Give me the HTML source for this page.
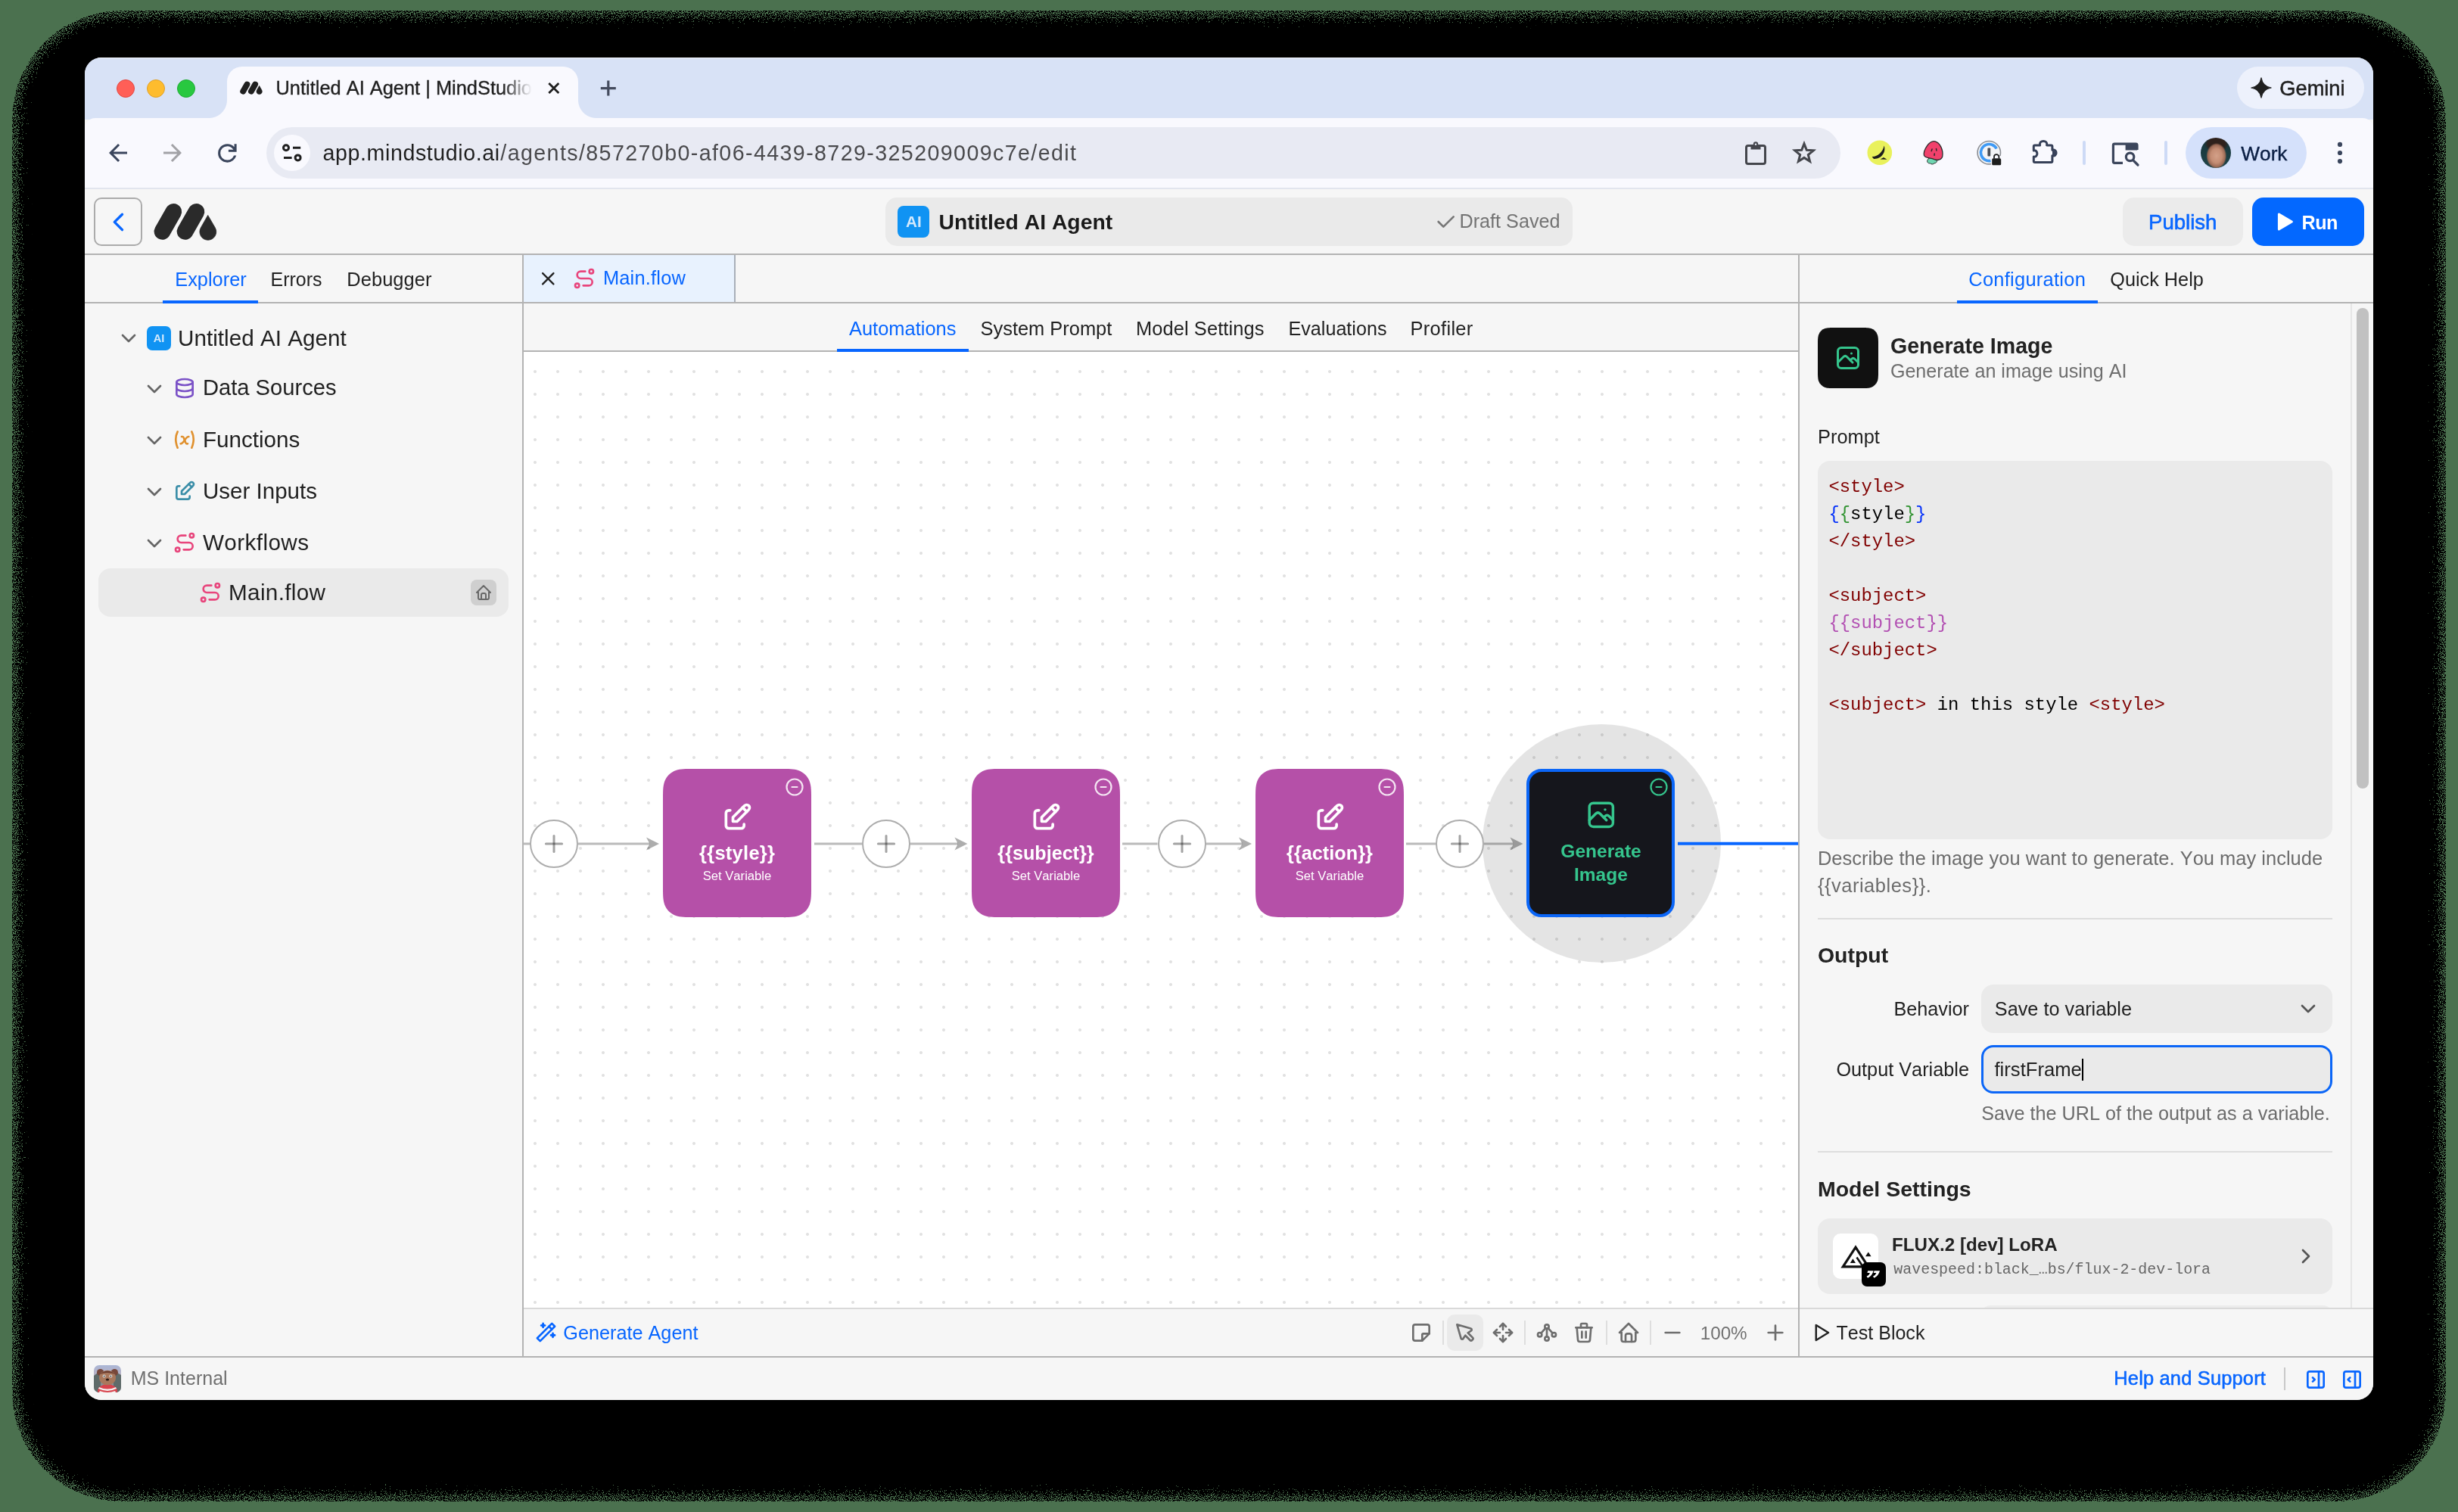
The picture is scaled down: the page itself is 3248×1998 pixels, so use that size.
<!DOCTYPE html>
<html><head><meta charset="utf-8"><title>MindStudio</title>
<style>
html,body{margin:0;padding:0;width:3248px;height:1998px;overflow:hidden;background:#4b714f;font-family:"Liberation Sans",sans-serif;font-kerning:none}
#root{position:relative;width:3248px;height:1998px;overflow:hidden}
#root div,#root span,#root svg{position:absolute;box-sizing:border-box}
#root span{white-space:pre;line-height:1;display:block}
#win{will-change:transform;left:112px;top:76px;width:3024px;height:1774px;border-radius:22px;overflow:hidden;background:#f6f6f6}
</style></head><body><div id="root">
<svg style="left:0;top:0" width="0" height="0"><defs><filter id="dz" x="0" y="0" width="100%" height="100%" filterUnits="objectBoundingBox" color-interpolation-filters="sRGB">
<feTurbulence type="fractalNoise" baseFrequency="0.85" numOctaves="1" seed="7" result="n"/>
<feColorMatrix in="n" type="matrix" values="0 0 0 0 0 0 0 0 0 0 0 0 0 0 0 1.9 0 0 0 -0.45" result="na"/>
<feComposite in="SourceGraphic" in2="na" operator="arithmetic" k1="0" k2="30" k3="-29" k4="0" result="t"/>
<feColorMatrix in="t" type="matrix" values="0 0 0 0 0 0 0 0 0 0 0 0 0 0 0 0 0 0 1 0"/>
</filter></defs></svg>
<div style="left:0;top:0;width:3248px;height:1998px;filter:url(#dz)">
<div style="left:16px;top:14px;width:3216px;height:1970px;border-radius:144px;background:rgba(0,0,0,0.5)"></div>
<div style="left:29px;top:27px;width:3190px;height:1944px;border-radius:131px;background:#000;filter:blur(6.5px)"></div>
<div style="left:60px;top:60px;width:3128px;height:1878px;border-radius:100px;background:#000"></div>
</div>
<div id="win"><div style="left:-112px;top:-76px;width:3248px;height:1998px"><div style="left:112px;top:76px;width:3024px;height:82px;background:#d8e2f6;border-radius:0px;"></div><div style="left:112px;top:76px;width:3024px;height:1px;background:rgba(255,255,255,0.75);border-radius:0px;"></div><div style="left:112px;top:156px;width:3024px;height:92px;background:#f9f9fe;border-radius:0px;border-radius:14px 14px 0 0;"></div><div style="left:112px;top:248px;width:3024px;height:2px;background:#e2e5ee;border-radius:0px;"></div><div style="left:300px;top:88px;width:464px;height:70px;background:#f9f9fe;border-radius:0px;border-radius:20px 20px 0 0;"></div><div style="left:276px;top:132px;width:24px;height:24px;background:;border-radius:0px;background:radial-gradient(circle at 0 0,#d8e2f6 23.5px,#f9f9fe 24.5px);"></div><div style="left:764px;top:132px;width:24px;height:24px;background:;border-radius:0px;background:radial-gradient(circle at 100% 0,#d8e2f6 23.5px,#f9f9fe 24.5px);"></div><div style="left:154px;top:104.5px;width:24px;height:24px;background:#ff5f57;border-radius:12px;border:1px solid #e24640;"></div><div style="left:194px;top:104.5px;width:24px;height:24px;background:#febc2e;border-radius:12px;border:1px solid #e0a028;"></div><div style="left:234px;top:104.5px;width:24px;height:24px;background:#28c840;border-radius:12px;border:1px solid #1eab33;"></div><svg style="left:312px;top:100px;" width="40" height="32" viewBox="312 100 40 32"><path d="M321.18,120.74 L326.45,111.48" stroke="#1f1f1f" stroke-width="7.76" stroke-linecap="round" fill="none"/><path d="M331.90,120.74 L337.16,111.48" stroke="#1f1f1f" stroke-width="7.76" stroke-linecap="round" fill="none"/><path d="M342.61,113.08 L346.03,118.99 A3.88,3.88 0 1 1 339.27,118.99 Z" fill="#1f1f1f" stroke="#1f1f1f" stroke-width="0.28" stroke-linejoin="round"/></svg><span style="left:364.50px;top:104.39px;font-family:'Liberation Sans';font-size:25.41px;font-weight:400;color:#1f1f1f;letter-spacing:0.000px;-webkit-text-stroke:0.35px #1f1f1f;">Untitled AI Agent | MindStudio</span><div style="left:664px;top:98px;width:52px;height:40px;background:;border-radius:0px;background:linear-gradient(to right,rgba(249,249,254,0) 0,#f9f9fe 75%);"></div><svg style="left:720px;top:104px;" width="24" height="24" viewBox="720 104 24 24"><path d="M725.3,110.1 L738.3,123.1 M738.3,110.1 L725.3,123.1" stroke="#1f1f1f" stroke-width="2.8" fill="none"/></svg><svg style="left:790px;top:102px;" width="28" height="28" viewBox="790 102 28 28"><path d="M803.8,106.6 V126.6 M793.8,116.6 H813.8" stroke="#444b5e" stroke-width="3.2" fill="none"/></svg><div style="left:2956px;top:88px;width:168px;height:56px;background:#edf1fc;border-radius:28px;"></div><svg style="left:2972px;top:100px;" width="32" height="32" viewBox="2972 100 32 32"><path d="M2988,102.8 C2989.2,110.4 2993.8,114.9 3001.2,116 C2993.8,117.1 2989.2,121.6 2988,129.2 C2986.8,121.6 2982.2,117.1 2974.8,116 C2982.2,114.9 2986.8,110.4 2988,102.8 Z" fill="#1f1f1f" stroke="#1f1f1f" stroke-width="1.2" stroke-linejoin="round"/></svg><span style="left:3012.30px;top:102.64px;font-family:'Liberation Sans';font-size:27.24px;font-weight:400;color:#1f1f1f;letter-spacing:0.000px;-webkit-text-stroke:0.5px #1f1f1f;">Gemini</span><svg style="left:138.2px;top:184px;" width="36" height="36" viewBox="0 0 24 24" fill="#3a455c" stroke="none" stroke-width="0" stroke-linecap="round" stroke-linejoin="round"><path d="M7.825 13l5.6 5.6L12 20l-8-8 8-8 1.425 1.4-5.6 5.6H20v2z"/></svg><svg style="left:210.1px;top:184px;" width="36" height="36" viewBox="0 0 24 24" fill="#a2a2a6" stroke="none" stroke-width="0" stroke-linecap="round" stroke-linejoin="round"><path d="M16.175 13H4v-2h12.175l-5.6-5.6L12 4l8 8-8 8-1.425-1.4z"/></svg><svg style="left:281.7px;top:183.6px;" width="36.75" height="36.75" viewBox="0 0 24 24" fill="#3a455c" stroke="none" stroke-width="0" stroke-linecap="round" stroke-linejoin="round"><path d="M12 20q-3.35 0-5.675-2.325T4 12t2.325-5.675T12 4q1.725 0 3.3.712T18 6.75V4h2v7h-7V9h4.2q-.8-1.4-2.187-2.2T12 6Q9.5 6 7.75 7.75T6 12t1.75 4.25T12 18q1.925 0 3.475-1.1T17.65 14h2.1q-.7 2.65-2.85 4.325T12 20"/></svg><div style="left:352px;top:168px;width:2080px;height:68px;background:#e8eaf3;border-radius:34px;"></div><div style="left:362px;top:178px;width:48px;height:48px;background:#f9f9fe;border-radius:24px;"></div><svg style="left:368px;top:186px;" width="36" height="32" viewBox="368 186 36 32"><g stroke="#1f1f1f" stroke-width="3" fill="none"><circle cx="378" cy="195.3" r="3.5"/><path d="M387,195.3 H397.2 M375,208.4 H385.6"/><circle cx="393.6" cy="208.4" r="3.5"/></g></svg><span style="left:426.50px;top:187.77px;font-family:'Liberation Sans';font-size:28.62px;font-weight:400;color:#1f1f1f;letter-spacing:0.591px;">app.mindstudio.ai</span><span style="left:661.30px;top:187.77px;font-family:'Liberation Sans';font-size:28.62px;font-weight:400;color:#4a4a4d;letter-spacing:1.399px;">/agents/857270b0-af06-4439-8729-325209009c7e/edit</span><svg style="left:2300px;top:182px;" width="40" height="40" viewBox="2300 182 40 40"><g fill="none" stroke="#44464c" stroke-width="3" stroke-linejoin="round"><rect x="2307.5" y="192.5" width="25" height="24" rx="2.5"/></g><path d="M2313.5,191 h13 v6.5 h-13 z" fill="#44464c"/><circle cx="2320" cy="190.5" r="3.2" fill="#44464c"/><circle cx="2320" cy="190.8" r="1.2" fill="#e8eaf3"/></svg><svg style="left:2364px;top:182px;" width="40" height="40" viewBox="2364 182 40 40"><polygon points="2384.00,189.90 2387.29,198.27 2396.27,198.81 2389.33,204.53 2391.58,213.24 2384.00,208.40 2376.42,213.24 2378.67,204.53 2371.73,198.81 2380.71,198.27" fill="none" stroke="#44464c" stroke-width="3" stroke-linejoin="miter"/></svg><svg style="left:2464px;top:182px;" width="40" height="40" viewBox="2464 182 40 40"><circle cx="2483.8" cy="201.7" r="16.3" fill="#e9f15c"/><path d="M2473.6,207 C2481,207.5 2488,201 2489.6,192.6 C2492.6,200.5 2486.5,210.5 2476,210 Z" fill="#1d1d1d"/><path d="M2484.5,210.6 L2489,208 L2493.6,210.8 Z" fill="#1d1d1d"/></svg><svg style="left:2536px;top:182px;" width="40" height="40" viewBox="2536 182 40 40"><path d="M2549,209 C2551.5,207.6 2556.5,208.3 2559,210.6 C2560.5,213 2558.6,216 2556,215.6 C2555,217.4 2551.6,217.4 2550.6,215.8 C2547.6,216.4 2545.8,213.6 2547,211.4 Z" fill="#6fd6b1" stroke="#2a2a2a" stroke-width="1"/><path d="M2557,186.8 C2563.5,188.5 2568,198 2566.8,206.5 C2566,211 2560.5,212.6 2556,210.6 C2550.5,208 2544.5,209.5 2542.5,205.5 C2541,199 2549,185 2557,186.8 Z" fill="#f1416c" stroke="#2a2a2a" stroke-width="1.3"/><path d="M2553,197 l-0.8,2.6 M2558.5,196.4 l0.4,2.6 M2556.2,203 l-0.2,2.4" stroke="#2a2a2a" stroke-width="1.5" stroke-linecap="round"/></svg><svg style="left:2608px;top:182px;" width="44" height="40" viewBox="2608 182 44 40"><circle cx="2628.3" cy="201.7" r="15.2" fill="#f4f4f6" stroke="#8a8d93" stroke-width="1.6"/><path d="M2638.2,196.5 A11,11 0 1 0 2630.5,212.4" fill="none" stroke="#3f9af5" stroke-width="3.6"/><rect x="2626.4" y="195.6" width="3.8" height="11" rx="1" fill="#4b4f58"/><rect x="2631" y="206" width="14" height="13" fill="#f9f9fe"/><path d="M2635,209.5 v-2.2 a3.2,3.2 0 0 1 6.4,0 v2.2" fill="none" stroke="#1d1d1d" stroke-width="1.8"/><rect x="2632.2" y="209.3" width="12" height="9" rx="1.6" fill="#1d1d1d"/></svg><svg style="left:2680px;top:180px;" width="44" height="40" viewBox="2680 180 44 40"><path d="M2687.3,193.4 A1.5,1.5 0 0 1 2688.8,191.9 H2695.6 C2693.6,184.6 2706.6,184.6 2704.6,191.9 H2710.4 A1.5,1.5 0 0 1 2711.9,193.4 V198.3 C2718.8,196.4 2718.8,207.6 2711.9,205.7 V213 A1.5,1.5 0 0 1 2710.4,214.5 H2688.8 A1.5,1.5 0 0 1 2687.3,213 V207 C2693.4,208.4 2693.4,197.6 2687.3,199 Z" fill="none" stroke="#364058" stroke-width="3" stroke-linejoin="round"/><path d="M2712,199 C2717.4,198 2717.4,206 2712,205 Z" fill="#364058"/></svg><div style="left:2752px;top:186px;width:4px;height:32px;background:#cddaf6;border-radius:2px;"></div><svg style="left:2786px;top:184px;" width="44" height="40" viewBox="2786 184 44 40"><g fill="none" stroke="#3c465c" stroke-width="3.2"><path d="M2805,215.4 H2794.2 A1.8,1.8 0 0 1 2792.4,213.6 V192 A1.8,1.8 0 0 1 2794.2,190.2 H2822.2 A1.8,1.8 0 0 1 2824,192 V198"/><circle cx="2814.6" cy="207.4" r="5.2"/><path d="M2818.6,211.6 L2825,218" stroke-linecap="round"/></g><path d="M2808.6,190 H2822.4 A1.8,1.8 0 0 1 2824.2,191.8 V198.6 H2808.6 Z" fill="#3c465c"/></svg><div style="left:2860px;top:186px;width:4px;height:32px;background:#cddaf6;border-radius:2px;"></div><div style="left:2888px;top:168px;width:160px;height:68px;background:#d5e1fb;border-radius:34px;"></div><div style="left:2908px;top:182px;width:40px;height:40px;background:;border-radius:20px;overflow:hidden;background:radial-gradient(ellipse 13.5px 17px at 52% 60%,#d3a088 0,#c48d74 55%,#9c6a55 85%,rgba(60,40,34,0) 100%),radial-gradient(ellipse 16px 12px at 52% 20%,#2e211c 0,#2e211c 70%,rgba(0,0,0,0) 100%),linear-gradient(#17353a,#1f4348);"></div><span style="left:2961.30px;top:189.60px;font-family:'Liberation Sans';font-size:26.23px;font-weight:400;color:#0b1f44;letter-spacing:0.000px;-webkit-text-stroke:0.4px #0b1f44;">Work</span><svg style="left:3084px;top:184px;" width="16" height="36" viewBox="3084 184 16 36"><g fill="#3a455c"><circle cx="3092" cy="190.9" r="3.1"/><circle cx="3092" cy="202" r="3.1"/><circle cx="3092" cy="213.1" r="3.1"/></g></svg><div style="left:112px;top:250px;width:3024px;height:86px;background:#f6f6f6;border-radius:0px;"></div><div style="left:112px;top:335px;width:3024px;height:2px;background:#b3b3b3;border-radius:0px;"></div><div style="left:124px;top:261px;width:64px;height:64px;background:#f6f6f6;border-radius:10px;border:2px solid #ababab;"></div><svg style="left:135.6px;top:272.6px;" width="40.8" height="40.8" viewBox="0 0 24 24" fill="none" stroke="#0866ff" stroke-width="2" stroke-linecap="round" stroke-linejoin="round"><path d="M15 6l-6 6l6 6"/></svg><svg style="left:196px;top:262px;" width="100" height="62" viewBox="196 262 100 62"><path d="M214.50,305.90 L229.30,279.90" stroke="#2a2a2a" stroke-width="21.80" stroke-linecap="round" fill="none"/><path d="M244.60,305.90 L259.40,279.90" stroke="#2a2a2a" stroke-width="21.80" stroke-linecap="round" fill="none"/><path d="M274.70,284.40 L284.30,301.00 A10.90,10.90 0 1 1 265.30,301.00 Z" fill="#2a2a2a" stroke="#2a2a2a" stroke-width="0.80" stroke-linejoin="round"/></svg><div style="left:1170px;top:261px;width:908px;height:64px;background:#eaeaea;border-radius:15px;"></div><div style="left:1186px;top:272px;width:42px;height:42px;background:#1093f3;border-radius:8px;"></div><span style="left:1197.10px;top:282.78px;font-family:'Liberation Sans';font-size:20.7px;font-weight:700;color:#d2e9fc;letter-spacing:0.000px;">AI</span><span style="left:1240.50px;top:279.03px;font-family:'Liberation Sans';font-size:28.32px;font-weight:700;color:#1a1a1a;letter-spacing:0.000px;">Untitled AI Agent</span><svg style="left:1893.5px;top:277px;" width="32" height="32" viewBox="0 0 24 24" fill="none" stroke="#777" stroke-width="2" stroke-linecap="round" stroke-linejoin="round"><path d="M5 12l5 5l10 -10"/></svg><span style="left:1928.50px;top:280.28px;font-family:'Liberation Sans';font-size:25.19px;font-weight:400;color:#737373;letter-spacing:0.000px;">Draft Saved</span><div style="left:2805px;top:261px;width:159px;height:64px;background:#ebebeb;border-radius:15px;"></div><span style="left:2839.00px;top:279.65px;font-family:'Liberation Sans';font-size:27.59px;font-weight:400;color:#0866ff;letter-spacing:0.000px;-webkit-text-stroke:0.6px #0866ff;">Publish</span><div style="left:2976px;top:261px;width:148px;height:64px;background:#0368ff;border-radius:15px;"></div><svg style="left:3004px;top:276px;" width="32" height="34" viewBox="3004 276 32 34"><path d="M3011.4,283 L3011.4,303 L3028.4,293 Z" fill="#fff" stroke="#fff" stroke-width="3" stroke-linejoin="round"/></svg><span style="left:3041.50px;top:281.67px;font-family:'Liberation Sans';font-size:25.2px;font-weight:700;color:#fff;letter-spacing:-0.497px;">Run</span><div style="left:690px;top:337px;width:2px;height:1456px;background:#b3b3b3;border-radius:0px;"></div><div style="left:112px;top:399px;width:580px;height:2px;background:#b3b3b3;border-radius:0px;"></div><span style="left:231.30px;top:357.04px;font-family:'Liberation Sans';font-size:25.35px;font-weight:400;color:#0866ff;letter-spacing:-0.000px;">Explorer</span><span style="left:357.50px;top:357.35px;font-family:'Liberation Sans';font-size:24.98px;font-weight:400;color:#222222;letter-spacing:-0.000px;">Errors</span><span style="left:458.30px;top:356.97px;font-family:'Liberation Sans';font-size:25.44px;font-weight:400;color:#222222;letter-spacing:0.065px;">Debugger</span><div style="left:215px;top:397px;width:126px;height:4px;background:#0866ff;border-radius:0px;"></div><svg style="left:154px;top:431.3px;" width="32" height="32" viewBox="0 0 24 24" fill="none" stroke="#666" stroke-width="2" stroke-linecap="round" stroke-linejoin="round"><path d="M6 9l6 6l6 -6"/></svg><div style="left:194px;top:431px;width:32px;height:32px;background:#1093f3;border-radius:7px;"></div><span style="left:202.80px;top:439.94px;font-family:'Liberation Sans';font-size:14.6px;font-weight:700;color:#d2e9fc;letter-spacing:0.000px;">AI</span><span style="left:235.00px;top:431.88px;font-family:'Liberation Sans';font-size:29.68px;font-weight:400;color:#222222;letter-spacing:0.010px;">Untitled AI Agent</span><svg style="left:188.2px;top:497.8px;" width="32" height="32" viewBox="0 0 24 24" fill="none" stroke="#666" stroke-width="2" stroke-linecap="round" stroke-linejoin="round"><path d="M6 9l6 6l6 -6"/></svg><svg style="left:228px;top:497px;" width="32" height="32" viewBox="0 0 24 24" fill="none" stroke="#7b52c7" stroke-width="2" stroke-linecap="round" stroke-linejoin="round"><path d="M12 6m-8 0a8 3 0 1 0 16 0a8 3 0 1 0 -16 0"/><path d="M4 6v6a8 3 0 0 0 16 0v-6"/><path d="M4 12v6a8 3 0 0 0 16 0v-6"/></svg><span style="left:267.90px;top:498.10px;font-family:'Liberation Sans';font-size:29.18px;font-weight:400;color:#222222;letter-spacing:0.000px;">Data Sources</span><svg style="left:188.2px;top:565.8px;" width="32" height="32" viewBox="0 0 24 24" fill="none" stroke="#666" stroke-width="2" stroke-linecap="round" stroke-linejoin="round"><path d="M6 9l6 6l6 -6"/></svg><svg style="left:228px;top:565px;" width="32" height="32" viewBox="0 0 24 24" fill="none" stroke="#e0912f" stroke-width="2" stroke-linecap="round" stroke-linejoin="round"><path d="M5 4c-2.5 5 -2.5 10 0 16m14 -16c2.5 5 2.5 10 0 16m-10 -11h1c1 0 1 1 2.016 3.527c.984 2.473 .984 3.473 1.984 3.473h1"/><path d="M8 16c1.5 0 3 -2 4 -3.5s2.5 -3.5 4 -3.5"/></svg><span style="left:267.90px;top:565.71px;font-family:'Liberation Sans';font-size:29.64px;font-weight:400;color:#222222;letter-spacing:0.000px;">Functions</span><svg style="left:188.2px;top:634.0999999999999px;" width="32" height="32" viewBox="0 0 24 24" fill="none" stroke="#666" stroke-width="2" stroke-linecap="round" stroke-linejoin="round"><path d="M6 9l6 6l6 -6"/></svg><svg style="left:228px;top:633.3px;" width="32" height="32" viewBox="0 0 24 24" fill="none" stroke="#3b8ea8" stroke-width="2" stroke-linecap="round" stroke-linejoin="round"><path d="M7 7h-1a2 2 0 0 0 -2 2v9a2 2 0 0 0 2 2h9a2 2 0 0 0 2 -2v-1"/><path d="M20.385 6.585a2.1 2.1 0 0 0 -2.97 -2.97l-8.415 8.385v3h3l8.385 -8.415z"/><path d="M16 5l3 3"/></svg><span style="left:267.90px;top:634.07px;font-family:'Liberation Sans';font-size:29.57px;font-weight:400;color:#222222;letter-spacing:0.000px;">User Inputs</span><svg style="left:188.2px;top:702.1999999999999px;" width="32" height="32" viewBox="0 0 24 24" fill="none" stroke="#666" stroke-width="2" stroke-linecap="round" stroke-linejoin="round"><path d="M6 9l6 6l6 -6"/></svg><svg style="left:228px;top:701.4px;" width="32" height="32" viewBox="0 0 24 24" fill="none" stroke="#e8457c" stroke-width="2" stroke-linecap="round" stroke-linejoin="round"><path d="M3 19a2 2 0 1 0 4 0a2 2 0 0 0 -4 0"/><path d="M19 7a2 2 0 1 0 0 -4a2 2 0 0 0 0 4z"/><path d="M11 19h5.5a3.5 3.5 0 0 0 0 -7h-8a3.5 3.5 0 0 1 0 -7h4.5"/></svg><span style="left:267.90px;top:702.08px;font-family:'Liberation Sans';font-size:29.68px;font-weight:400;color:#222222;letter-spacing:0.416px;">Workflows</span><div style="left:130px;top:751px;width:542px;height:64px;background:#eaeaea;border-radius:16px;"></div><svg style="left:262.1px;top:767.3px;" width="32" height="32" viewBox="0 0 24 24" fill="none" stroke="#e8457c" stroke-width="2" stroke-linecap="round" stroke-linejoin="round"><path d="M3 19a2 2 0 1 0 4 0a2 2 0 0 0 -4 0"/><path d="M19 7a2 2 0 1 0 0 -4a2 2 0 0 0 0 4z"/><path d="M11 19h5.5a3.5 3.5 0 0 0 0 -7h-8a3.5 3.5 0 0 1 0 -7h4.5"/></svg><span style="left:302.00px;top:767.88px;font-family:'Liberation Sans';font-size:29.68px;font-weight:400;color:#222222;letter-spacing:0.330px;">Main.flow</span><div style="left:622px;top:766px;width:34px;height:34px;background:#cfcfcf;border-radius:8px;"></div><svg style="left:627px;top:771px;" width="24" height="24" viewBox="0 0 24 24" fill="none" stroke="#686868" stroke-width="2" stroke-linecap="round" stroke-linejoin="round"><path d="M5 12l-2 0l9 -9l9 9l-2 0"/><path d="M5 12v7a2 2 0 0 0 2 2h10a2 2 0 0 0 2 -2v-7"/><path d="M9 21v-6a2 2 0 0 1 2 -2h2a2 2 0 0 1 2 2v6"/></svg><div style="left:692px;top:337px;width:278px;height:62px;background:#e8f2fe;border-radius:0px;"></div><div style="left:970px;top:337px;width:2px;height:62px;background:#a9afb9;border-radius:0px;"></div><div style="left:692px;top:399px;width:1684px;height:2px;background:#b3b3b3;border-radius:0px;"></div><svg style="left:709.7px;top:353.8px;" width="28.5" height="28.5" viewBox="0 0 24 24" fill="none" stroke="#222" stroke-width="2" stroke-linecap="round" stroke-linejoin="round"><path d="M18 6l-12 12"/><path d="M6 6l12 12"/></svg><svg style="left:756px;top:352.1px;" width="32" height="32" viewBox="0 0 24 24" fill="none" stroke="#e8457c" stroke-width="2" stroke-linecap="round" stroke-linejoin="round"><path d="M3 19a2 2 0 1 0 4 0a2 2 0 0 0 -4 0"/><path d="M19 7a2 2 0 1 0 0 -4a2 2 0 0 0 0 4z"/><path d="M11 19h5.5a3.5 3.5 0 0 0 0 -7h-8a3.5 3.5 0 0 1 0 -7h4.5"/></svg><span style="left:796.90px;top:355.07px;font-family:'Liberation Sans';font-size:25.44px;font-weight:400;color:#0866ff;letter-spacing:0.193px;">Main.flow</span><div style="left:692px;top:463px;width:1684px;height:2px;background:#b3b3b3;border-radius:0px;"></div><span style="left:1121.90px;top:421.67px;font-family:'Liberation Sans';font-size:25.44px;font-weight:400;color:#0866ff;letter-spacing:0.019px;">Automations</span><span style="left:1295.50px;top:421.67px;font-family:'Liberation Sans';font-size:25.43px;font-weight:400;color:#222222;letter-spacing:0.000px;">System Prompt</span><span style="left:1500.90px;top:421.67px;font-family:'Liberation Sans';font-size:25.44px;font-weight:400;color:#222222;letter-spacing:0.101px;">Model Settings</span><span style="left:1702.50px;top:421.91px;font-family:'Liberation Sans';font-size:25.15px;font-weight:400;color:#222222;letter-spacing:0.000px;">Evaluations</span><span style="left:1863.50px;top:421.67px;font-family:'Liberation Sans';font-size:25.44px;font-weight:400;color:#222222;letter-spacing:0.315px;">Profiler</span><div style="left:1106px;top:461px;width:174px;height:4px;background:#0866ff;border-radius:0px;"></div><div style="left:692px;top:465px;width:1684px;height:1263px;background:#fff;border-radius:0px;background-image:radial-gradient(circle,#e1e1e1 0,#e1e1e1 1.5px,rgba(225,225,225,0) 2.4px);background-size:30px 30px;background-position:0px 11px;"></div><div style="left:692px;top:1728px;width:1684px;height:2px;background:#d9d9d9;border-radius:0px;"></div><div style="left:692px;top:1730px;width:1684px;height:62px;background:#f6f6f6;border-radius:0px;"></div><div style="left:1958.5px;top:956.5px;width:315px;height:315px;background:rgba(0,0,0,0.105);border-radius:158px;"></div><svg style="left:692px;top:1090px;" width="1684" height="50" viewBox="692 1090 1684 50"><path d="M692,1115 H700" stroke="rgba(0,0,0,0.27)" stroke-width="3" fill="none"/><path d="M764,1115 H858.5" stroke="rgba(0,0,0,0.27)" stroke-width="3" fill="none"/><path d="M1076,1115 H1139" stroke="rgba(0,0,0,0.27)" stroke-width="3" fill="none"/><path d="M1203,1115 H1266" stroke="rgba(0,0,0,0.27)" stroke-width="3" fill="none"/><path d="M1483,1115 H1529.5" stroke="rgba(0,0,0,0.27)" stroke-width="3" fill="none"/><path d="M1593.5,1115 H1641.5" stroke="rgba(0,0,0,0.27)" stroke-width="3" fill="none"/><path d="M1858,1115 H1897" stroke="rgba(0,0,0,0.27)" stroke-width="3" fill="none"/><path d="M1961,1115 H2000" stroke="rgba(0,0,0,0.27)" stroke-width="3" fill="none"/><path d="M871,1115 L854,1106.4 L858.5,1115 L854,1123.6 Z" fill="rgba(0,0,0,0.32)"/><path d="M1278.4,1115 L1261.4,1106.4 L1265.9,1115 L1261.4,1123.6 Z" fill="rgba(0,0,0,0.32)"/><path d="M1654,1115 L1637,1106.4 L1641.5,1115 L1637,1123.6 Z" fill="rgba(0,0,0,0.32)"/><path d="M2012.5,1115 L1995.5,1106.4 L2000.0,1115 L1995.5,1123.6 Z" fill="rgba(0,0,0,0.32)"/><path d="M2217,1114.8 H2376" stroke="#0866ff" stroke-width="4" fill="none"/></svg><div style="left:700px;top:1083px;width:64px;height:64px;background:#fff;border-radius:32px;border:2.4px solid #adadad;"></div><svg style="left:718px;top:1101px;" width="28" height="28" viewBox="718 1101 28 28"><path d="M732,1104.4 V1125.6" stroke="rgba(0,0,0,0.36)" stroke-width="3" stroke-linecap="round" fill="none"/><path d="M721.4,1115 H742.6" stroke="rgba(0,0,0,0.36)" stroke-width="3" stroke-linecap="round" fill="none"/></svg><div style="left:1139px;top:1083px;width:64px;height:64px;background:#fff;border-radius:32px;border:2.4px solid #adadad;"></div><svg style="left:1157px;top:1101px;" width="28" height="28" viewBox="1157 1101 28 28"><path d="M1171,1104.4 V1125.6" stroke="rgba(0,0,0,0.36)" stroke-width="3" stroke-linecap="round" fill="none"/><path d="M1160.4,1115 H1181.6" stroke="rgba(0,0,0,0.36)" stroke-width="3" stroke-linecap="round" fill="none"/></svg><div style="left:1529.5px;top:1083px;width:64px;height:64px;background:#fff;border-radius:32px;border:2.4px solid #adadad;"></div><svg style="left:1547.5px;top:1101px;" width="28" height="28" viewBox="1547.5 1101 28 28"><path d="M1561.5,1104.4 V1125.6" stroke="rgba(0,0,0,0.36)" stroke-width="3" stroke-linecap="round" fill="none"/><path d="M1550.9,1115 H1572.1" stroke="rgba(0,0,0,0.36)" stroke-width="3" stroke-linecap="round" fill="none"/></svg><div style="left:1897px;top:1083px;width:64px;height:64px;background:#fff;border-radius:32px;border:2.4px solid #adadad;"></div><svg style="left:1915px;top:1101px;" width="28" height="28" viewBox="1915 1101 28 28"><path d="M1929,1104.4 V1125.6" stroke="rgba(0,0,0,0.36)" stroke-width="3" stroke-linecap="round" fill="none"/><path d="M1918.4,1115 H1939.6" stroke="rgba(0,0,0,0.36)" stroke-width="3" stroke-linecap="round" fill="none"/></svg><svg style="left:876px;top:1016px;" width="196" height="196" viewBox="876 1016 196 196"><path d="M917.27,1016 L1030.73,1016 C1042.61,1016 1048.55,1016 1054.95,1018.02 C1061.93,1020.56 1067.44,1026.07 1069.98,1033.05 C1072,1039.45 1072,1045.39 1072,1057.27 L1072,1170.73 C1072,1182.61 1072,1188.55 1069.98,1194.95 C1067.44,1201.93 1061.93,1207.44 1054.95,1209.98 C1048.55,1212 1042.61,1212 1030.73,1212 L917.27,1212 C905.39,1212 899.45,1212 893.05,1209.98 C886.07,1207.44 880.56,1201.93 878.02,1194.95 C876,1188.55 876,1182.61 876,1170.73 L876,1057.27 C876,1045.39 876,1039.45 878.02,1033.05 C880.56,1026.07 886.07,1020.56 893.05,1018.02 C899.45,1016 905.39,1016 917.27,1016 Z" fill="#b550a8"/></svg><svg style="left:952px;top:1058px;" width="44" height="44" viewBox="0 0 24 24" fill="none" stroke="#fff" stroke-width="2" stroke-linecap="round" stroke-linejoin="round"><path d="M7 7h-1a2 2 0 0 0 -2 2v9a2 2 0 0 0 2 2h9a2 2 0 0 0 2 -2v-1"/><path d="M20.385 6.585a2.1 2.1 0 0 0 -2.97 -2.97l-8.415 8.385v3h3l8.385 -8.415z"/><path d="M16 5l3 3"/></svg><span style="left:924.05px;top:1115.17px;font-family:'Liberation Sans';font-size:25.44px;font-weight:700;color:#fff;letter-spacing:0.289px;">{{style}}</span><span style="left:928.65px;top:1149.71px;font-family:'Liberation Sans';font-size:16.65px;font-weight:400;color:#fff;letter-spacing:-0.000px;">Set Variable</span><svg style="left:1036px;top:1026px;" width="28" height="28" viewBox="0 0 24 24" fill="none" stroke="rgba(255,255,255,0.85)" stroke-width="1.9" stroke-linecap="round" stroke-linejoin="round"><path d="M3 12a9 9 0 1 0 18 0a9 9 0 1 0 -18 0"/><path d="M9 12l6 0"/></svg><svg style="left:1284px;top:1016px;" width="196" height="196" viewBox="1284 1016 196 196"><path d="M1325.27,1016 L1438.73,1016 C1450.61,1016 1456.55,1016 1462.95,1018.02 C1469.93,1020.56 1475.44,1026.07 1477.98,1033.05 C1480,1039.45 1480,1045.39 1480,1057.27 L1480,1170.73 C1480,1182.61 1480,1188.55 1477.98,1194.95 C1475.44,1201.93 1469.93,1207.44 1462.95,1209.98 C1456.55,1212 1450.61,1212 1438.73,1212 L1325.27,1212 C1313.39,1212 1307.45,1212 1301.05,1209.98 C1294.07,1207.44 1288.56,1201.93 1286.02,1194.95 C1284,1188.55 1284,1182.61 1284,1170.73 L1284,1057.27 C1284,1045.39 1284,1039.45 1286.02,1033.05 C1288.56,1026.07 1294.07,1020.56 1301.05,1018.02 C1307.45,1016 1313.39,1016 1325.27,1016 Z" fill="#b550a8"/></svg><svg style="left:1360px;top:1058px;" width="44" height="44" viewBox="0 0 24 24" fill="none" stroke="#fff" stroke-width="2" stroke-linecap="round" stroke-linejoin="round"><path d="M7 7h-1a2 2 0 0 0 -2 2v9a2 2 0 0 0 2 2h9a2 2 0 0 0 2 -2v-1"/><path d="M20.385 6.585a2.1 2.1 0 0 0 -2.97 -2.97l-8.415 8.385v3h3l8.385 -8.415z"/><path d="M16 5l3 3"/></svg><span style="left:1318.35px;top:1115.39px;font-family:'Liberation Sans';font-size:25.17px;font-weight:700;color:#fff;letter-spacing:0.000px;">{{subject}}</span><span style="left:1336.65px;top:1149.71px;font-family:'Liberation Sans';font-size:16.65px;font-weight:400;color:#fff;letter-spacing:0.000px;">Set Variable</span><svg style="left:1444px;top:1026px;" width="28" height="28" viewBox="0 0 24 24" fill="none" stroke="rgba(255,255,255,0.85)" stroke-width="1.9" stroke-linecap="round" stroke-linejoin="round"><path d="M3 12a9 9 0 1 0 18 0a9 9 0 1 0 -18 0"/><path d="M9 12l6 0"/></svg><svg style="left:1659px;top:1016px;" width="196" height="196" viewBox="1659 1016 196 196"><path d="M1700.27,1016 L1813.73,1016 C1825.61,1016 1831.55,1016 1837.95,1018.02 C1844.93,1020.56 1850.44,1026.07 1852.98,1033.05 C1855,1039.45 1855,1045.39 1855,1057.27 L1855,1170.73 C1855,1182.61 1855,1188.55 1852.98,1194.95 C1850.44,1201.93 1844.93,1207.44 1837.95,1209.98 C1831.55,1212 1825.61,1212 1813.73,1212 L1700.27,1212 C1688.39,1212 1682.45,1212 1676.05,1209.98 C1669.07,1207.44 1663.56,1201.93 1661.02,1194.95 C1659,1188.55 1659,1182.61 1659,1170.73 L1659,1057.27 C1659,1045.39 1659,1039.45 1661.02,1033.05 C1663.56,1026.07 1669.07,1020.56 1676.05,1018.02 C1682.45,1016 1688.39,1016 1700.27,1016 Z" fill="#b550a8"/></svg><svg style="left:1735px;top:1058px;" width="44" height="44" viewBox="0 0 24 24" fill="none" stroke="#fff" stroke-width="2" stroke-linecap="round" stroke-linejoin="round"><path d="M7 7h-1a2 2 0 0 0 -2 2v9a2 2 0 0 0 2 2h9a2 2 0 0 0 2 -2v-1"/><path d="M20.385 6.585a2.1 2.1 0 0 0 -2.97 -2.97l-8.415 8.385v3h3l8.385 -8.415z"/><path d="M16 5l3 3"/></svg><span style="left:1700.10px;top:1115.30px;font-family:'Liberation Sans';font-size:25.28px;font-weight:700;color:#fff;letter-spacing:0.000px;">{{action}}</span><span style="left:1711.65px;top:1149.71px;font-family:'Liberation Sans';font-size:16.65px;font-weight:400;color:#fff;letter-spacing:0.000px;">Set Variable</span><svg style="left:1819px;top:1026px;" width="28" height="28" viewBox="0 0 24 24" fill="none" stroke="rgba(255,255,255,0.85)" stroke-width="1.9" stroke-linecap="round" stroke-linejoin="round"><path d="M3 12a9 9 0 1 0 18 0a9 9 0 1 0 -18 0"/><path d="M9 12l6 0"/></svg><div style="left:2017px;top:1016px;width:196px;height:196px;background:#15161c;border-radius:20px;border:4px solid #0b66f7;"></div><svg style="left:2094.7px;top:1055.8px;" width="41.6" height="41.6" viewBox="0 0 24 24" fill="none" stroke="#35c58d" stroke-width="2" stroke-linecap="round" stroke-linejoin="round"><path d="M15 8h.01"/><path d="M3 6a3 3 0 0 1 3 -3h12a3 3 0 0 1 3 3v12a3 3 0 0 1 -3 3h-12a3 3 0 0 1 -3 -3v-12z"/><path d="M3 16l5 -5c.928 -.893 2.072 -.893 3 0l5 5"/><path d="M14 14l1 -1c.928 -.893 2.072 -.893 3 0l3 3"/></svg><span style="left:2062.30px;top:1112.81px;font-family:'Liberation Sans';font-size:24.56px;font-weight:700;color:#35c58d;letter-spacing:0.000px;">Generate</span><span style="left:2080.00px;top:1144.17px;font-family:'Liberation Sans';font-size:24.49px;font-weight:700;color:#35c58d;letter-spacing:0.000px;">Image</span><svg style="left:2177.5px;top:1026.1px;" width="28" height="28" viewBox="0 0 24 24" fill="none" stroke="#35c58d" stroke-width="1.9" stroke-linecap="round" stroke-linejoin="round"><path d="M3 12a9 9 0 1 0 18 0a9 9 0 1 0 -18 0"/><path d="M9 12l6 0"/></svg><svg style="left:706px;top:1745px;" width="31" height="31" viewBox="0 0 24 24" fill="none" stroke="#0866ff" stroke-width="2" stroke-linecap="round" stroke-linejoin="round"><path d="M6 21l15 -15l-3 -3l-15 15l3 3"/><path d="M15 6l3 3"/><path d="M9 3a2 2 0 0 0 2 2a2 2 0 0 0 -2 2a2 2 0 0 0 -2 -2a2 2 0 0 0 2 -2"/><path d="M19 13a2 2 0 0 0 2 2a2 2 0 0 0 -2 2a2 2 0 0 0 -2 -2a2 2 0 0 0 2 -2"/></svg><span style="left:744.30px;top:1748.93px;font-family:'Liberation Sans';font-size:25.24px;font-weight:400;color:#0866ff;letter-spacing:0.000px;">Generate Agent</span><svg style="left:1861.9px;top:1745.3px;" width="32" height="32" viewBox="0 0 24 24" fill="none" stroke="#6e6e6e" stroke-width="2" stroke-linecap="round" stroke-linejoin="round"><path d="M13 20l7 -7"/><path d="M13 20v-6a1 1 0 0 1 1 -1h6v-7a2 2 0 0 0 -2 -2h-12a2 2 0 0 0 -2 2v12a2 2 0 0 0 2 2h7"/></svg><div style="left:1906px;top:1745px;width:2px;height:32px;background:#dedede;border-radius:0px;"></div><div style="left:2014px;top:1745px;width:2px;height:32px;background:#dedede;border-radius:0px;"></div><div style="left:2122px;top:1745px;width:2px;height:32px;background:#dedede;border-radius:0px;"></div><div style="left:2180px;top:1745px;width:2px;height:32px;background:#dedede;border-radius:0px;"></div><div style="left:1912px;top:1737px;width:48px;height:48px;background:#eaeaea;border-radius:10px;"></div><svg style="left:1920px;top:1745px;" width="32" height="32" viewBox="0 0 24 24" fill="none" stroke="#6e6e6e" stroke-width="2" stroke-linecap="round" stroke-linejoin="round"><path d="M7.904 17.563a1.2 1.2 0 0 0 2.228 .308l2.09 -3.093l4.907 4.907a1.067 1.067 0 0 0 1.509 0l1.047 -1.047a1.067 1.067 0 0 0 0 -1.509l-4.907 -4.907l3.113 -2.09a1.2 1.2 0 0 0 -.309 -2.228l-13.582 -3.904l3.904 13.563z"/></svg><svg style="left:1970px;top:1745px;" width="32" height="32" viewBox="0 0 24 24" fill="none" stroke="#6e6e6e" stroke-width="2" stroke-linecap="round" stroke-linejoin="round"><path d="M18 9l3 3l-3 3"/><path d="M15 12h6"/><path d="M6 9l-3 3l3 3"/><path d="M3 12h6"/><path d="M9 18l3 3l3 -3"/><path d="M12 15v6"/><path d="M15 6l-3 -3l-3 3"/><path d="M12 3v6"/></svg><svg style="left:2027.8px;top:1745px;" width="32" height="32" viewBox="0 0 24 24" fill="none" stroke="#6e6e6e" stroke-width="2" stroke-linecap="round" stroke-linejoin="round"><path d="M14 6a2 2 0 1 0 -4 0a2 2 0 0 0 4 0z"/><path d="M7 14a2 2 0 1 0 -4 0a2 2 0 0 0 4 0z"/><path d="M21 14a2 2 0 1 0 -4 0a2 2 0 0 0 4 0z"/><path d="M14 18a2 2 0 1 0 -4 0a2 2 0 0 0 4 0z"/><path d="M12 8v8"/><path d="M6.316 12.496l4.368 -4.992"/><path d="M17.684 12.496l-4.368 -4.992"/></svg><svg style="left:2077.4px;top:1745px;" width="32" height="32" viewBox="0 0 24 24" fill="none" stroke="#6e6e6e" stroke-width="2" stroke-linecap="round" stroke-linejoin="round"><path d="M4 7l16 0"/><path d="M10 11l0 6"/><path d="M14 11l0 6"/><path d="M5 7l1 12a2 2 0 0 0 2 2h8a2 2 0 0 0 2 -2l1 -12"/><path d="M9 7v-3a1 1 0 0 1 1 -1h4a1 1 0 0 1 1 1v3"/></svg><svg style="left:2136px;top:1745px;" width="32" height="32" viewBox="0 0 24 24" fill="none" stroke="#6e6e6e" stroke-width="2" stroke-linecap="round" stroke-linejoin="round"><path d="M5 12l-2 0l9 -9l9 9l-2 0"/><path d="M5 12v7a2 2 0 0 0 2 2h10a2 2 0 0 0 2 -2v-7"/><path d="M9 21v-6a2 2 0 0 1 2 -2h2a2 2 0 0 1 2 2v6"/></svg><svg style="left:2193.7px;top:1745px;" width="32" height="32" viewBox="0 0 24 24" fill="none" stroke="#6e6e6e" stroke-width="2" stroke-linecap="round" stroke-linejoin="round"><path d="M5 12l14 0"/></svg><span style="left:2246.70px;top:1750.18px;font-family:'Liberation Sans';font-size:24.24px;font-weight:400;color:#727272;letter-spacing:0.000px;">100%</span><svg style="left:2329.5px;top:1745px;" width="32" height="32" viewBox="0 0 24 24" fill="none" stroke="#6e6e6e" stroke-width="2" stroke-linecap="round" stroke-linejoin="round"><path d="M12 5l0 14"/><path d="M5 12l14 0"/></svg><div style="left:2376px;top:337px;width:2px;height:1456px;background:#b3b3b3;border-radius:0px;"></div><div style="left:2378px;top:399px;width:758px;height:2px;background:#b3b3b3;border-radius:0px;"></div><span style="left:2601.30px;top:356.97px;font-family:'Liberation Sans';font-size:25.44px;font-weight:400;color:#0866ff;letter-spacing:0.264px;">Configuration</span><span style="left:2788.30px;top:357.13px;font-family:'Liberation Sans';font-size:25.25px;font-weight:400;color:#222222;letter-spacing:0.000px;">Quick Help</span><div style="left:2586px;top:397px;width:186px;height:4px;background:#0866ff;border-radius:0px;"></div><div style="left:3106px;top:401px;width:2px;height:1327px;background:#e6e6e6;border-radius:0px;"></div><div style="left:3114px;top:407px;width:16px;height:635px;background:#c1c1c1;border-radius:8px;"></div><svg style="left:2402px;top:433px;" width="80" height="80" viewBox="2402 433 80 80"><path d="M2424.93,433 L2459.07,433 C2465.67,433 2468.97,433 2472.53,434.12 C2476.41,435.54 2479.46,438.59 2480.88,442.47 C2482,446.03 2482,449.33 2482,455.93 L2482,490.07 C2482,496.67 2482,499.97 2480.88,503.53 C2479.46,507.41 2476.41,510.46 2472.53,511.88 C2468.97,513 2465.67,513 2459.07,513 L2424.93,513 C2418.33,513 2415.03,513 2411.47,511.88 C2407.59,510.46 2404.54,507.41 2403.12,503.53 C2402,499.97 2402,496.67 2402,490.07 L2402,455.93 C2402,449.33 2402,446.03 2403.12,442.47 C2404.54,438.59 2407.59,435.54 2411.47,434.12 C2415.03,433 2418.33,433 2424.93,433 Z" fill="#111"/></svg><svg style="left:2424px;top:454.8px;" width="36" height="36" viewBox="0 0 24 24" fill="none" stroke="#35c58d" stroke-width="2" stroke-linecap="round" stroke-linejoin="round"><path d="M15 8h.01"/><path d="M3 6a3 3 0 0 1 3 -3h12a3 3 0 0 1 3 3v12a3 3 0 0 1 -3 3h-12a3 3 0 0 1 -3 -3v-12z"/><path d="M3 16l5 -5c.928 -.893 2.072 -.893 3 0l5 5"/><path d="M14 14l1 -1c.928 -.893 2.072 -.893 3 0l3 3"/></svg><span style="left:2497.90px;top:442.79px;font-family:'Liberation Sans';font-size:28.6px;font-weight:700;color:#222;letter-spacing:-0.000px;">Generate Image</span><span style="left:2497.90px;top:477.95px;font-family:'Liberation Sans';font-size:25.1px;font-weight:400;color:#6e6e6e;letter-spacing:0.000px;">Generate an image using AI</span><span style="left:2402.10px;top:564.72px;font-family:'Liberation Sans';font-size:25.38px;font-weight:400;color:#222222;letter-spacing:0.000px;">Prompt</span><div style="left:2402px;top:609px;width:680px;height:500px;background:#eaeaea;border-radius:16px;"></div><span style="left:2416.40px;top:631.88px;font-family:'Liberation Mono';font-size:23.9px;font-weight:400;color:#000;letter-spacing:0.000px;"><span style="position:static;display:inline;color:#800000">&lt;style&gt;</span></span><span style="left:2416.40px;top:667.88px;font-family:'Liberation Mono';font-size:23.9px;font-weight:400;color:#000;letter-spacing:0.000px;"><span style="position:static;display:inline;color:#0431fa">{</span><span style="position:static;display:inline;color:#319331">{</span><span style="position:static;display:inline;color:#000">style</span><span style="position:static;display:inline;color:#319331">}</span><span style="position:static;display:inline;color:#0431fa">}</span></span><span style="left:2416.40px;top:703.88px;font-family:'Liberation Mono';font-size:23.9px;font-weight:400;color:#000;letter-spacing:0.000px;"><span style="position:static;display:inline;color:#800000">&lt;/style&gt;</span></span><span style="left:2416.40px;top:775.88px;font-family:'Liberation Mono';font-size:23.9px;font-weight:400;color:#000;letter-spacing:0.000px;"><span style="position:static;display:inline;color:#800000">&lt;subject&gt;</span></span><span style="left:2416.40px;top:811.88px;font-family:'Liberation Mono';font-size:23.9px;font-weight:400;color:#000;letter-spacing:0.000px;"><span style="position:static;display:inline;color:#b24fb2">{{subject}}</span></span><span style="left:2416.40px;top:847.88px;font-family:'Liberation Mono';font-size:23.9px;font-weight:400;color:#000;letter-spacing:0.000px;"><span style="position:static;display:inline;color:#800000">&lt;/subject&gt;</span></span><span style="left:2416.40px;top:919.88px;font-family:'Liberation Mono';font-size:23.9px;font-weight:400;color:#000;letter-spacing:0.000px;"><span style="position:static;display:inline;color:#800000">&lt;subject&gt;</span><span style="position:static;display:inline;color:#000"> in this style </span><span style="position:static;display:inline;color:#800000">&lt;style&gt;</span></span><span style="left:2401.90px;top:1121.97px;font-family:'Liberation Sans';font-size:25.44px;font-weight:400;color:#6c6c6c;letter-spacing:0.021px;">Describe the image you want to generate. You may include</span><span style="left:2401.90px;top:1157.97px;font-family:'Liberation Sans';font-size:25.44px;font-weight:400;color:#6c6c6c;letter-spacing:0.541px;">{{variables}}.</span><div style="left:2402px;top:1213px;width:680px;height:2px;background:#dddddd;border-radius:0px;"></div><span style="left:2401.90px;top:1248.00px;font-family:'Liberation Sans';font-size:28.47px;font-weight:700;color:#222;letter-spacing:0.000px;">Output</span><span style="left:2502.50px;top:1320.86px;font-family:'Liberation Sans';font-size:25.21px;font-weight:400;color:#222222;letter-spacing:-0.000px;">Behavior</span><div style="left:2618px;top:1301px;width:464px;height:64px;background:#eaeaea;border-radius:16px;"></div><span style="left:2635.80px;top:1320.81px;font-family:'Liberation Sans';font-size:25.27px;font-weight:400;color:#222222;letter-spacing:0.000px;">Save to variable</span><svg style="left:3033.7px;top:1317px;" width="32" height="32" viewBox="0 0 24 24" fill="none" stroke="#555" stroke-width="2" stroke-linecap="round" stroke-linejoin="round"><path d="M6 9l6 6l6 -6"/></svg><span style="left:2426.40px;top:1401.21px;font-family:'Liberation Sans';font-size:25.27px;font-weight:400;color:#222222;letter-spacing:0.000px;">Output Variable</span><div style="left:2618px;top:1381px;width:464px;height:64px;background:#eaeaea;border-radius:16px;border:3px solid #0b66f7;"></div><span style="left:2635.50px;top:1400.80px;font-family:'Liberation Sans';font-size:25.64px;font-weight:400;color:#222;letter-spacing:0.000px;">firstFrame</span><div style="left:2750.6px;top:1398.5px;width:2px;height:29.5px;background:#000;border-radius:0px;"></div><span style="left:2618.20px;top:1458.87px;font-family:'Liberation Sans';font-size:25.2px;font-weight:400;color:#6c6c6c;letter-spacing:0.000px;">Save the URL of the output as a variable.</span><div style="left:2402px;top:1520.5px;width:680px;height:2px;background:#dddddd;border-radius:0px;"></div><span style="left:2401.90px;top:1557.16px;font-family:'Liberation Sans';font-size:28.52px;font-weight:700;color:#222;letter-spacing:0.000px;">Model Settings</span><div style="left:2402px;top:1610px;width:680px;height:100px;background:#eaeaea;border-radius:16px;"></div><div style="left:2422px;top:1630px;width:60px;height:60px;background:#fff;border-radius:10px;"></div><svg style="left:2422px;top:1630px;" width="60" height="60" viewBox="2422 1630 60 60"><path d="M2452,1648.2 L2468.7,1673.9 H2435.3 Z" fill="none" stroke="#111" stroke-width="3.2" stroke-linejoin="miter"/><path d="M2444.8,1669 L2448.4,1663.2 L2452,1669 Z M2465,1660.3 L2468.8,1654.6 L2472.6,1660.3 Z" fill="#111"/><path d="M2453.5,1661.5 L2461.5,1673.5" stroke="#111" stroke-width="2.6"/></svg><svg style="left:2460px;top:1668px;" width="32" height="32" viewBox="2460 1668 32 32"><path d="M2470.70,1668 L2481.30,1668 C2484.38,1668 2485.92,1668 2487.58,1668.52 C2489.39,1669.18 2490.82,1670.61 2491.48,1672.42 C2492,1674.08 2492,1675.62 2492,1678.70 L2492,1689.30 C2492,1692.38 2492,1693.92 2491.48,1695.58 C2490.82,1697.39 2489.39,1698.82 2487.58,1699.48 C2485.92,1700 2484.38,1700 2481.30,1700 L2470.70,1700 C2467.62,1700 2466.08,1700 2464.42,1699.48 C2462.61,1698.82 2461.18,1697.39 2460.52,1695.58 C2460,1693.92 2460,1692.38 2460,1689.30 L2460,1678.70 C2460,1675.62 2460,1674.08 2460.52,1672.42 C2461.18,1670.61 2462.61,1669.18 2464.42,1668.52 C2466.08,1668 2467.62,1668 2470.70,1668 Z" fill="#000"/><g fill="#fff"><path d="M2468.2,1679.2 h7.4 q-1.6,6.6 -7.6,9.6 l-1.4,-2.2 q3.6,-1.8 4.4,-4.6 h-3.6 z"/><path d="M2476.6,1679.2 h7.4 q-1.6,6.6 -7.6,9.6 l-1.4,-2.2 q3.6,-1.8 4.4,-4.6 h-3.6 z"/></g></svg><span style="left:2500.10px;top:1632.66px;font-family:'Liberation Sans';font-size:24.15px;font-weight:700;color:#222;letter-spacing:0.000px;">FLUX.2 [dev] LoRA</span><span style="left:2502.30px;top:1668.31px;font-family:'Liberation Mono';font-size:19.95px;font-weight:400;color:#666;letter-spacing:0.000px;">wavespeed:black_…bs/flux-2-dev-lora</span><svg style="left:3031.4px;top:1643.7px;" width="32" height="32" viewBox="0 0 24 24" fill="none" stroke="#555" stroke-width="2" stroke-linecap="round" stroke-linejoin="round"><path d="M9 6l6 6l-6 6"/></svg><div style="left:2618px;top:1725px;width:464px;height:12px;background:#ececec;border-radius:0px;border-radius:16px 16px 0 0;"></div><div style="left:2378px;top:1728px;width:758px;height:2px;background:#d9d9d9;border-radius:0px;"></div><div style="left:2378px;top:1730px;width:758px;height:62px;background:#f6f6f6;border-radius:0px;"></div><svg style="left:2391.3px;top:1745.7px;" width="30" height="30" viewBox="0 0 24 24" fill="none" stroke="#222" stroke-width="2" stroke-linecap="round" stroke-linejoin="round"><path d="M7 4v16l13 -8z"/></svg><span style="left:2426.50px;top:1748.99px;font-family:'Liberation Sans';font-size:25.06px;font-weight:400;color:#222222;letter-spacing:0.000px;">Test Block</span><div style="left:112px;top:1792px;width:3024px;height:2px;background:#b3b3b3;border-radius:0px;"></div><div style="left:112px;top:1794px;width:3024px;height:56px;background:#f6f6f6;border-radius:0px;"></div><div style="left:124px;top:1804px;width:36px;height:36px;background:;border-radius:7px;overflow:hidden;background:linear-gradient(#aab6d6 0,#b9b3c6 35%,#7f8a8a 60%,#9a9fb0 100%);"></div><svg style="left:124px;top:1804px;border-radius:7px;" width="36" height="36" viewBox="124 1804 36 36"><g><path d="M124,1818 l5,-4 l4,5 l0,21 h-9z M160,1817 l-5,-3 l-5,6 v20 h10z" fill="#5f6b6a"/><ellipse cx="142" cy="1838" rx="13" ry="9" fill="#d8434d"/><path d="M130.5,1834 q11.5,5.5 23,0" stroke="#f6efee" stroke-width="2.4" fill="none"/><path d="M131.5,1839 q10.5,4 21,0" stroke="#f6efee" stroke-width="2" fill="none"/><circle cx="132.6" cy="1813.5" r="4.6" fill="#77473a"/><circle cx="151.4" cy="1813.5" r="4.6" fill="#77473a"/><ellipse cx="142" cy="1820.5" rx="11" ry="9.8" fill="#a9785d"/><path d="M131.5,1816 q10.5,-9 21,0 q-10.5,-4 -21,0z" fill="#6b3c2f"/><circle cx="137.6" cy="1818.4" r="1.9" fill="#fff"/><circle cx="146.4" cy="1818.4" r="1.9" fill="#fff"/><circle cx="137.6" cy="1818.4" r="1" fill="#222"/><circle cx="146.4" cy="1818.4" r="1" fill="#222"/><ellipse cx="142" cy="1823" rx="2.2" ry="1.6" fill="#2a1a16"/></g></svg><span style="left:172.70px;top:1809.41px;font-family:'Liberation Sans';font-size:25.03px;font-weight:400;color:#707070;letter-spacing:0.000px;">MS Internal</span><span style="left:2793.30px;top:1808.87px;font-family:'Liberation Sans';font-size:25.44px;font-weight:400;color:#0866ff;letter-spacing:0.173px;-webkit-text-stroke:0.55px #0866ff;">Help and Support</span><div style="left:3018px;top:1807px;width:2px;height:30px;background:#c9c9c9;border-radius:0px;"></div><svg style="left:3044.2px;top:1806.5px;" width="32" height="32" viewBox="0 0 24 24" fill="none" stroke="#0866ff" stroke-width="2" stroke-linecap="round" stroke-linejoin="round"><path d="M4 6a2 2 0 0 1 2 -2h12a2 2 0 0 1 2 2v12a2 2 0 0 1 -2 2h-12a2 2 0 0 1 -2 -2z"/><path d="M15 4v16"/><path d="M9 10l2 2l-2 2"/></svg><svg style="left:3092px;top:1806.5px;" width="32" height="32" viewBox="0 0 24 24" fill="none" stroke="#0866ff" stroke-width="2" stroke-linecap="round" stroke-linejoin="round"><path d="M4 6a2 2 0 0 1 2 -2h12a2 2 0 0 1 2 2v12a2 2 0 0 1 -2 2h-12a2 2 0 0 1 -2 -2z"/><path d="M15 4v16"/><path d="M10 10l-2 2l2 2"/></svg></div></div>
</div></body></html>
